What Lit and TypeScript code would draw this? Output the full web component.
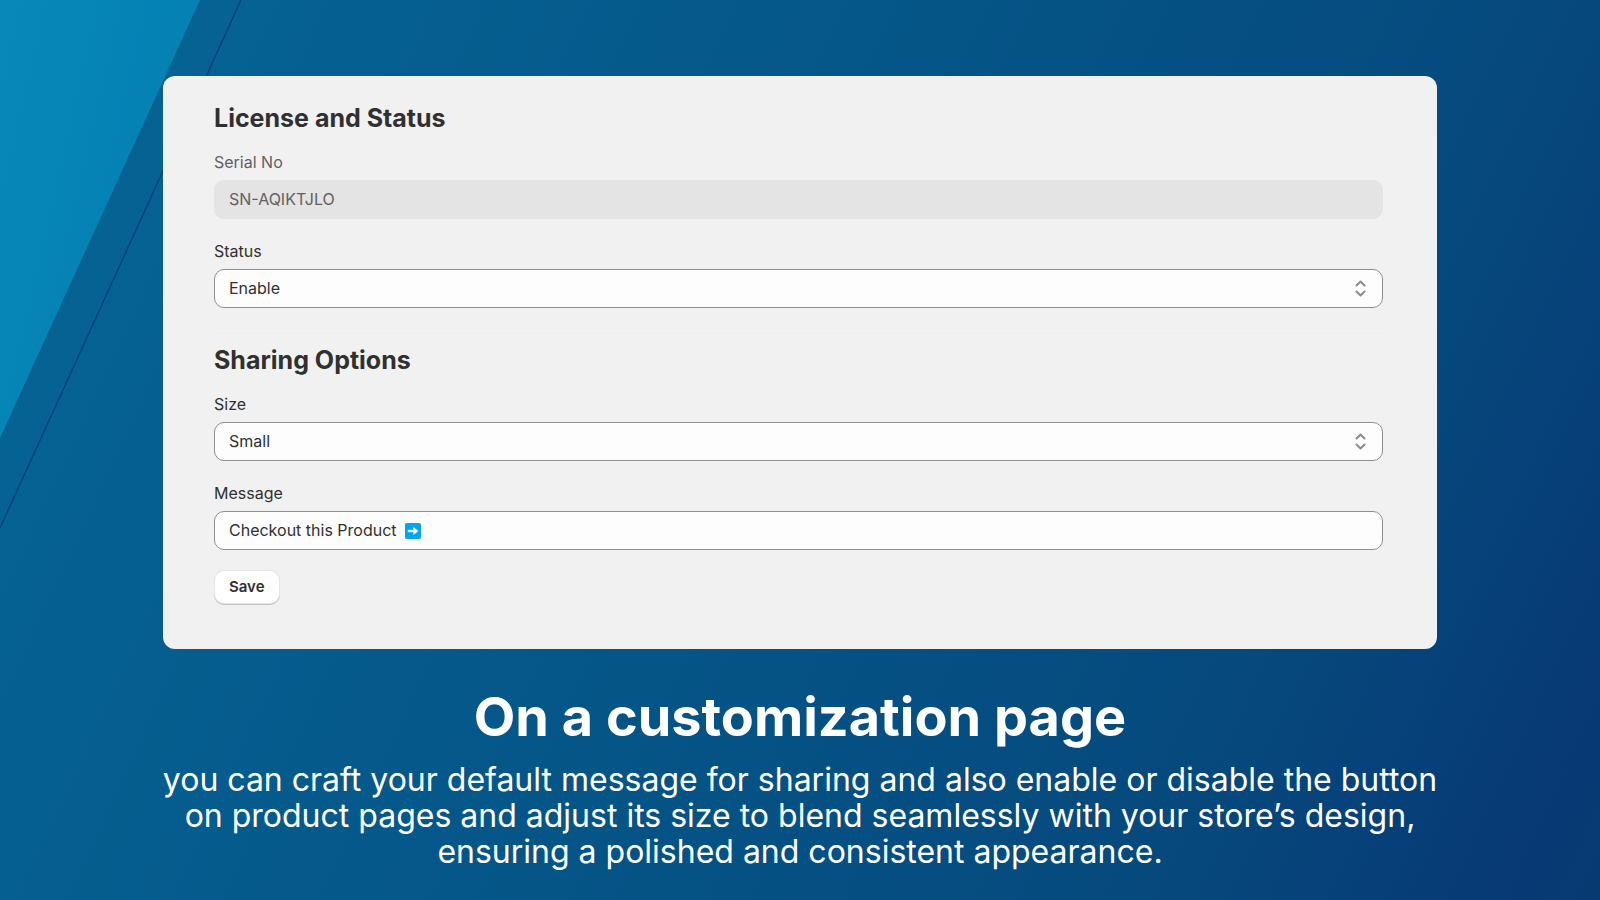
import { LitElement, html, css, svg } from "lit";
import { customElement, property, state } from "lit/decorators.js";

const chevrons = svg`<path d="M1.5 5.5 5.5 1.5 9.5 5.5M1.5 11.5 5.5 15.5 9.5 11.5" fill="none" stroke="#8a8a8a" stroke-width="2" stroke-linejoin="round" stroke-linecap="round"/>`;

@customElement("settings-card")
export class SettingsCard extends LitElement {
  @property() serial = "SN-AQIKTJLO";
  @state() private message = "Checkout this Product";

  static styles = css`
    :host {
      display: block;
      box-sizing: border-box;
      padding: 24px 54px 46px 51px;
      background: #f1f1f1;
      border-radius: 12px;
      color: #303030;
      font: 16px/22px Inter, sans-serif;
    }
    .title {
      margin: 0;
      font-size: 25px;
      line-height: 36px;
      font-weight: 700;
    }
    .section + .section {
      margin-top: 20px;
      padding-top: 13px;
      border-top: 1px solid #eeeeee;
    }
    .field {
      display: flex;
      flex-direction: column;
      gap: 7px;
      margin-top: 15px;
    }
    .field + .field {
      margin-top: 21px;
    }
    .muted {
      color: #616161;
    }
    .control {
      display: grid;
      grid-template-columns: minmax(0, 1fr) auto;
      align-items: center;
      height: 39px;
      box-sizing: border-box;
      border: 1px solid #8f8f8f;
      border-radius: 10px;
      background: #fdfdfd;
    }
    .control.disabled {
      background: #e4e4e4;
      border-color: #e4e4e4;
    }
    .control.message {
      display: flex;
      gap: 8px;
    }
    input,
    select {
      font: inherit;
      color: inherit;
      border: 0;
      margin: 0;
      background: transparent;
      appearance: none;
      outline: none;
      height: 37px;
      padding: 0 14px 2px;
      min-width: 0;
      box-sizing: border-box;
      border-radius: 10px;
    }
    .select > * {
      grid-row: 1;
    }
    .select select {
      grid-column: 1 / 3;
    }
    .select svg {
      grid-column: 2;
      margin-right: 16px;
      pointer-events: none;
    }
    .message input {
      field-sizing: content;
      padding-right: 0;
    }
    input:disabled {
      color: #616161;
    }
    svg {
      display: block;
      flex: none;
    }
    .save {
      display: block;
      margin: 21px 0 0 1px;
      padding: 0 14px;
      height: 32px;
      border: 0;
      border-radius: 9px;
      background: #fff;
      box-shadow: 0 0 0 1px #e6e6e6, 0 1px 0 1px #c4c4c4;
      font: 600 15px/32px Inter, sans-serif;
      color: #303030;
    }
  `;

  private renderSelect(id: string, label: string, options: string[]) {
    return html`<div class="field">
      <label for=${id}>${label}</label>
      <div class="control select">
        <select id=${id}>
          ${options.map((o) => html`<option>${o}</option>`)}
        </select>
        <svg width="11" height="17" viewBox="0 0 11 17" aria-hidden="true">${chevrons}</svg>
      </div>
    </div>`;
  }

  render() {
    return html`
      <section class="section">
        <h2 class="title">License and Status</h2>
        <div class="field muted">
          <label for="serial">Serial No</label>
          <div class="control disabled">
            <input id="serial" .value=${this.serial} disabled />
          </div>
        </div>
        ${this.renderSelect("status", "Status", ["Enable", "Disable"])}
      </section>
      <section class="section">
        <h2 class="title">Sharing Options</h2>
        ${this.renderSelect("size", "Size", ["Small", "Medium", "Large"])}
        <div class="field">
          <label for="message">Message</label>
          <div class="control message">
            <input id="message" .value=${this.message} />
            <svg width="16" height="16" viewBox="0 0 16 16" aria-hidden="true">
              <rect width="16" height="16" rx="2" fill="#03a5f0" />
              <path d="M3 7.2H8.6V4.6L13 8 8.6 11.4V8.8H3Z" fill="#fff" stroke="#fff" stroke-width=".6" stroke-linejoin="round" />
            </svg>
          </div>
        </div>
      </section>
      <button class="save" type="button">Save</button>
    `;
  }
}

@customElement("app-root")
export class AppRoot extends LitElement {
  static styles = css`
    :host {
      display: block;
      position: relative;
      isolation: isolate;
      box-sizing: border-box;
      min-height: 100vh;
      padding: 76px 0 24px;
      background: linear-gradient(115deg, #056697 0%, #055688 45%, #06487c 79%, #073b76 93%, #083a72 100%);
      color: #fff;
      overflow: hidden;
    }
    .decor {
      position: absolute;
      inset: 0 auto auto 0;
      z-index: -1;
    }
    settings-card {
      margin: 0 163px;
    }
    .caption {
      text-align: center;
      margin-top: 34px;
      font-family: Inter, sans-serif;
    }
    .headline {
      margin: 0;
      font: 700 54px/68px Inter, sans-serif;
    }
    .text {
      margin: 11px 0 0;
      font-size: 32px;
      line-height: 36px;
    }
    .line {
      display: block;
    }
  `;

  render() {
    return html`
      <svg class="decor" width="242" height="530" viewBox="0 0 242 530" aria-hidden="true">
        <defs>
          <linearGradient id="wedge" x1="0" y1="0" x2="1" y2="0.5">
            <stop offset="0" stop-color="#0688b8" />
            <stop offset="1" stop-color="#057fb3" />
          </linearGradient>
        </defs>
        <path d="M0 0H200L0 438Z" fill="url(#wedge)" />
        <path d="M241 0 0 528" stroke="#063c76" stroke-width="1.2" />
      </svg>
      <settings-card></settings-card>
      <div class="caption">
        <h1 class="headline">On a customization page</h1>
        <p class="text">
          <span class="line">you can craft your default message for sharing and also enable or disable the button</span>
          <span class="line">on product pages and adjust its size to blend seamlessly with your store’s design,</span>
          <span class="line">ensuring a polished and consistent appearance.</span>
        </p>
      </div>
    `;
  }
}
